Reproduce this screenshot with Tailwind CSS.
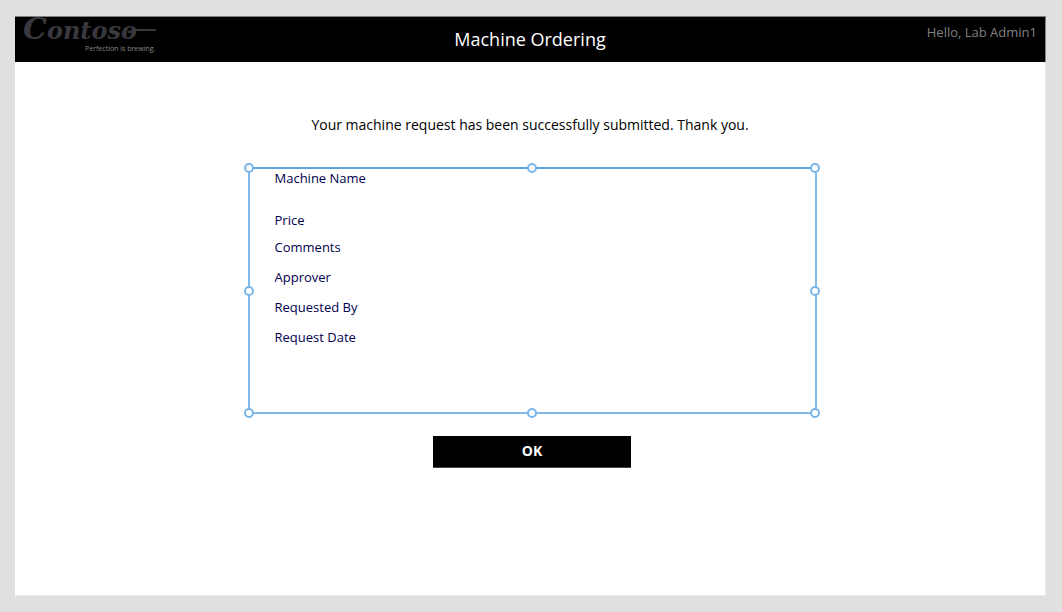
<!DOCTYPE html>
<html lang="en">
<head>
<meta charset="utf-8">
<meta name="viewport" content="width=device-width, initial-scale=1">
<title>Machine Ordering</title>
<script src="https://cdn.jsdelivr.net/npm/@tailwindcss/browser@4"></script>
</head>
<body class="flex min-h-screen flex-col bg-[#e0e0e0] pt-4 pr-4 pb-4 pl-[15px] font-['Open_Sans',sans-serif] text-black">
  <div class="flex grow flex-col border-r border-b border-[#ededed] bg-white">
    <header class="-mr-px grid h-[46px] grid-cols-3 border-t border-r border-[#808080] bg-black">
      <div class="relative pl-2" aria-label="Contoso, Perfection is brewing.">
        <div class="flex items-baseline font-['DejaVu_Serif',serif] leading-6 font-bold text-[#39383e] italic">
          <span class="text-[30px] leading-6">C</span><span class="text-[24px] leading-6">ontoso</span>
        </div>
        <!-- Swash running out of the wordmark -->
        <svg class="absolute top-2 left-[112px]" width="30" height="8" viewBox="0 0 30 8" fill="none" stroke="#39383e" stroke-width="2" aria-hidden="true"><path d="M1 7C6 7 6 5 11 5H29"/></svg>
        <p class="absolute top-[26px] left-[70px] text-[7px] leading-3 whitespace-nowrap text-[#8a857e]">Perfection is brewing.</p>
      </div>
      <h1 class="self-center pb-0.5 text-center text-lg leading-6 whitespace-nowrap text-white">Machine Ordering</h1>
      <p class="pt-[5px] pr-2 text-right text-[13px] leading-5 text-[#808080]">Hello, Lab Admin1</p>
    </header>

    <main class="flex flex-col items-center">
      <p class="mt-[53px] text-center text-sm leading-5">Your machine request has been successfully submitted. Thank you.</p>

      <div class="mt-8 flex w-full flex-col items-center pl-1">
        <section class="relative w-full max-w-[569px] border-2 border-x-[#7fbaea] border-t-[#5aa5e0] border-b-[#7fbaea] pb-[66px] pl-[25px] text-[13px] leading-[18px] text-[#000050]" aria-label="Request details">
          <dl class="flex flex-col">
            <dt class="mb-6">Machine Name</dt>
            <dt class="mb-[9px]">Price</dt>
            <dt class="mb-3">Comments</dt>
            <dt class="mb-3">Approver</dt>
            <dt class="mb-3">Requested By</dt>
            <dt>Request Date</dt>
          </dl>
          <!-- Resize handles -->
          <span class="absolute -top-[6px] -left-[6px] size-[10px] rounded-full border-2 border-[#78b5e8] bg-white"></span>
          <span class="absolute -top-[6px] left-1/2 size-[10px] -translate-x-1/2 rounded-full border-2 border-[#78b5e8] bg-white"></span>
          <span class="absolute -top-[6px] -right-[5px] size-[10px] rounded-full border-2 border-[#78b5e8] bg-white"></span>
          <span class="absolute top-1/2 -left-[6px] size-[10px] -translate-y-1/2 rounded-full border-2 border-[#78b5e8] bg-white"></span>
          <span class="absolute top-1/2 -right-[5px] size-[10px] -translate-y-1/2 rounded-full border-2 border-[#78b5e8] bg-white"></span>
          <span class="absolute -bottom-[6px] -left-[6px] size-[10px] rounded-full border-2 border-[#78b5e8] bg-white"></span>
          <span class="absolute -bottom-[6px] left-1/2 size-[10px] -translate-x-1/2 rounded-full border-2 border-[#78b5e8] bg-white"></span>
          <span class="absolute -right-[5px] -bottom-[6px] size-[10px] rounded-full border-2 border-[#78b5e8] bg-white"></span>
        </section>
        <button type="button" class="mt-[22px] h-8 w-[198px] border-b border-[#444] bg-black pb-px text-sm font-bold text-white">OK</button>
      </div>
    </main>
  </div>
</body>
</html>
